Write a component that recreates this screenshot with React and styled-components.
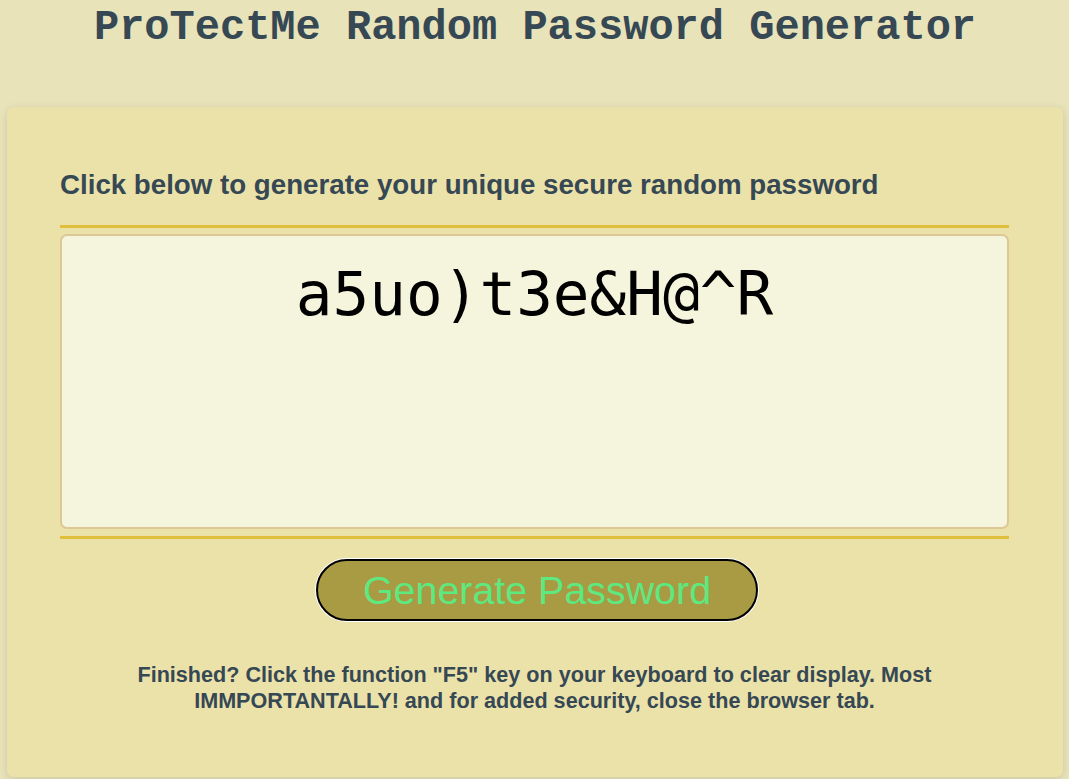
import React from "react";
import styled, { createGlobalStyle } from "styled-components";

const Global = createGlobalStyle`
  html, body { margin: 0; padding: 0; }
  body {
    background: #e8e3b9;
    font-family: "Liberation Sans", Arial, sans-serif;
    color: #364853;
  }
`;

const Wrapper = styled.div`
  padding: 0 6px 2px 7px;
`;

const Header = styled.header`
  text-align: center;
  height: 107px;
`;

const Title = styled.h1`
  margin: 0;
  padding-top: 5px;
  font-family: "Liberation Mono", "Courier New", monospace;
  font-size: 42px;
  line-height: 46px;
  font-weight: 700;
  color: #364853;
`;

const Card = styled.main`
  background: #ebe2aa;
  border-radius: 7px;
  box-shadow: rgba(0, 0, 0, 0.12) 0 2px 8px 0;
  padding: 62px 54px 0 53px;
  height: 670px;
  box-sizing: border-box;
`;

const CardTitle = styled.h2`
  margin: 0;
  font-size: 27.7px;
  line-height: 32px;
  font-weight: 700;
  color: #364853;
`;

const Rule = styled.div`
  height: 3px;
  background: #e1be3c;
  margin-top: ${(p) => p.$top}px;
`;

const PasswordBox = styled.textarea`
  display: block;
  width: 100%;
  box-sizing: border-box;
  height: 295px;
  margin: 6px 0 7px;
  border: 2px solid #dcc795;
  border-radius: 7px;
  background: #f5f4dc;
  resize: none;
  overflow: hidden;
  font-family: "DejaVu Sans Mono", monospace;
  font-size: 61px;
  line-height: 76px;
  text-align: center;
  color: #000;
  padding: 20px 15px 0;
  outline: none;
`;

const Footer = styled.div`
  text-align: center;
`;

const Button = styled.button`
  display: inline-block;
  margin: 20px 15px 0 20px;
  width: 442px;
  height: 62px;
  border-radius: 31px;
  border: 2px solid #000;
  box-shadow: 0 0 0 1px #fff;
  background: #a99a44;
  color: #5ee880;
  font-family: "Liberation Sans", Arial, sans-serif;
  font-size: 39.4px;
  line-height: 40px;
  padding: 0;
  cursor: pointer;
`;

const Note = styled.p`
  margin: 41px auto 0;
  max-width: 880px;
  font-size: 21.6px;
  line-height: 26px;
  font-weight: 700;
  color: #364853;
`;

export default function App() {
  return (
    <>
      <Global />
      <Wrapper>
        <Header>
          <Title>ProTectMe Random Password Generator</Title>
        </Header>
        <Card>
          <CardTitle>Click below to generate your unique secure random password</CardTitle>
          <Rule $top={24} />
          <PasswordBox readOnly value="a5uo)t3e&H@^R" />
          <Rule $top={0} />
          <Footer>
            <Button type="button">Generate Password</Button>
            <Note>
              Finished? Click the function "F5" key on your keyboard to clear display. Most
              IMMPORTANTALLY! and for added security, close the browser tab.
            </Note>
          </Footer>
        </Card>
      </Wrapper>
    </>
  );
}
